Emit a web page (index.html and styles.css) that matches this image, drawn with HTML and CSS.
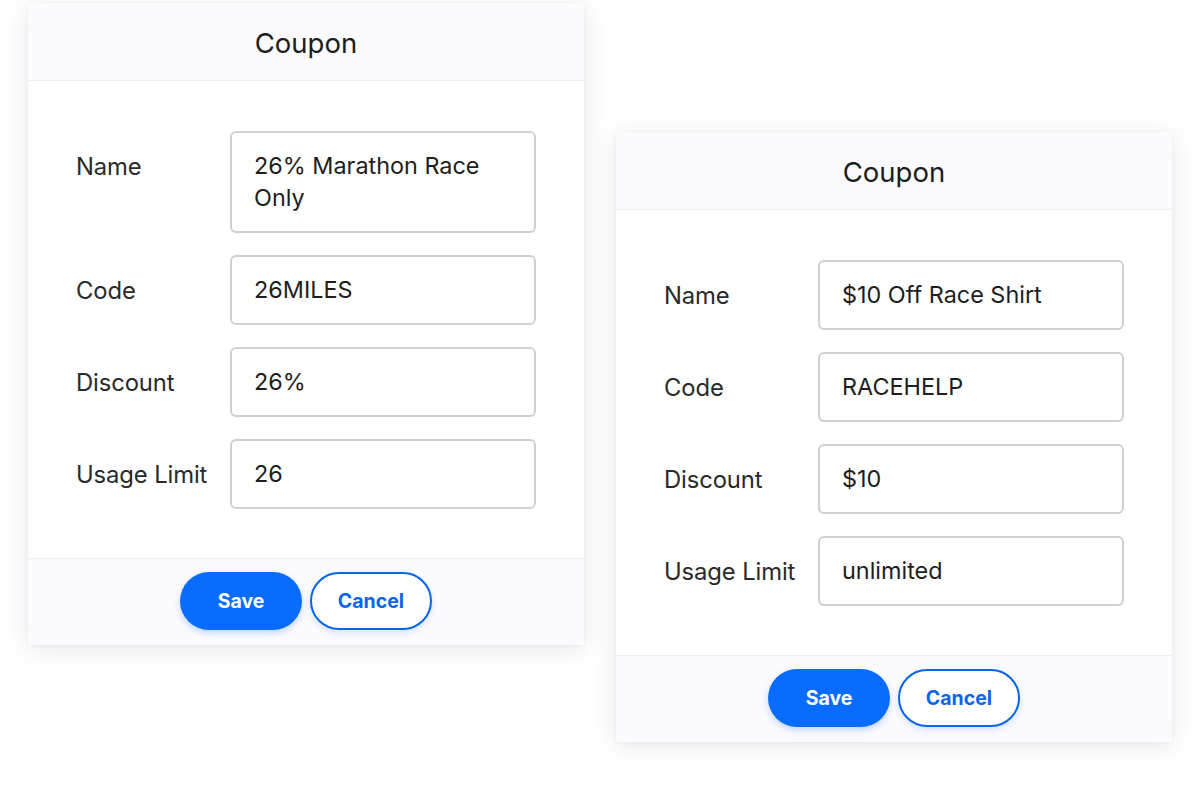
FILE: index.html
```html
<!DOCTYPE html>
<html>
<head>
<meta charset="utf-8">
<link rel="stylesheet" href="styles.css">
</head>
<body>
<div class="canvas">
  <section class="card card-a">
    <header class="card-head">Coupon</header>
    <div class="card-body">
      <div class="row"><div class="label">Name</div><div class="field">26% Marathon Race Only</div></div>
      <div class="row"><div class="label">Code</div><div class="field">26MILES</div></div>
      <div class="row"><div class="label">Discount</div><div class="field">26%</div></div>
      <div class="row"><div class="label">Usage Limit</div><div class="field">26</div></div>
    </div>
    <footer class="card-foot">
      <button class="btn btn-save">Save</button>
      <button class="btn btn-cancel">Cancel</button>
    </footer>
  </section>

  <section class="card card-b">
    <header class="card-head">Coupon</header>
    <div class="card-body">
      <div class="row"><div class="label">Name</div><div class="field">$10 Off Race Shirt</div></div>
      <div class="row"><div class="label">Code</div><div class="field">RACEHELP</div></div>
      <div class="row"><div class="label">Discount</div><div class="field">$10</div></div>
      <div class="row"><div class="label">Usage Limit</div><div class="field">unlimited</div></div>
    </div>
    <footer class="card-foot">
      <button class="btn btn-save">Save</button>
      <button class="btn btn-cancel">Cancel</button>
    </footer>
  </section>
</div>
</body>
</html>
```

FILE: styles.css
```css
* { box-sizing: border-box; }
html, body { margin: 0; padding: 0; background: #ffffff; }
body {
  font-family: Inter, "Open Sans", sans-serif;
  color: #222222;
  width: 1202px;
  height: 792px;
  overflow: hidden;
}
.canvas { position: relative; width: 1202px; height: 792px; }

.card {
  position: absolute;
  width: 556px;
  background: #ffffff;
  box-shadow: 0 4px 24px rgba(40, 40, 80, 0.10), 0 1px 4px rgba(40, 40, 80, 0.05);
  display: flex;
  flex-direction: column;
}
.card-a { left: 28px; top: 3px; }
.card-b { left: 616px; top: 132px; }

.card-head {
  height: 78px;
  background: #fbfafd;
  border-bottom: 1px solid #f0eff4;
  display: flex;
  align-items: center;
  justify-content: center;
  font-size: 27.5px;
  color: #1c1c1c;
  padding-top: 2px;
}

.card-body {
  padding: 50px 48px 49px 48px;
  display: flex;
  flex-direction: column;
  gap: 22px;
}
.row { display: flex; align-items: flex-start; }
.label {
  width: 154px;
  flex: none;
  font-size: 23.8px;
  line-height: 32px;
  padding-top: 20px;
  color: #2a2a2a;
  letter-spacing: -0.1px;
}
.field {
  width: 306px;
  flex: none;
  border: 2px solid #cfcfd1;
  border-radius: 6px;
  padding: 17px 24px 17px 22px;
  font-size: 23.4px;
  line-height: 32px;
  color: #1e1e1e;
  background: #fff;
}

.card-foot {
  background: #fbfafd;
  border-top: 1px solid #f0eff4;
  padding: 13px 0 15px;
  display: flex;
  justify-content: center;
  gap: 8px;
}
.btn {
  width: 122px;
  height: 58px;
  border-radius: 29px;
  font-family: Inter, sans-serif;
  font-weight: 700;
  font-size: 19.5px;
  cursor: pointer;
}
.btn-save {
  background: #0a6cff;
  border: none;
  color: #ffffff;
  box-shadow: 0 3px 6px rgba(10, 108, 255, 0.25);
}
.btn-cancel {
  background: #ffffff;
  border: 2px solid #0a66e8;
  color: #0a66e8;
  box-shadow: 0 3px 6px rgba(10, 108, 255, 0.15);
}
```
